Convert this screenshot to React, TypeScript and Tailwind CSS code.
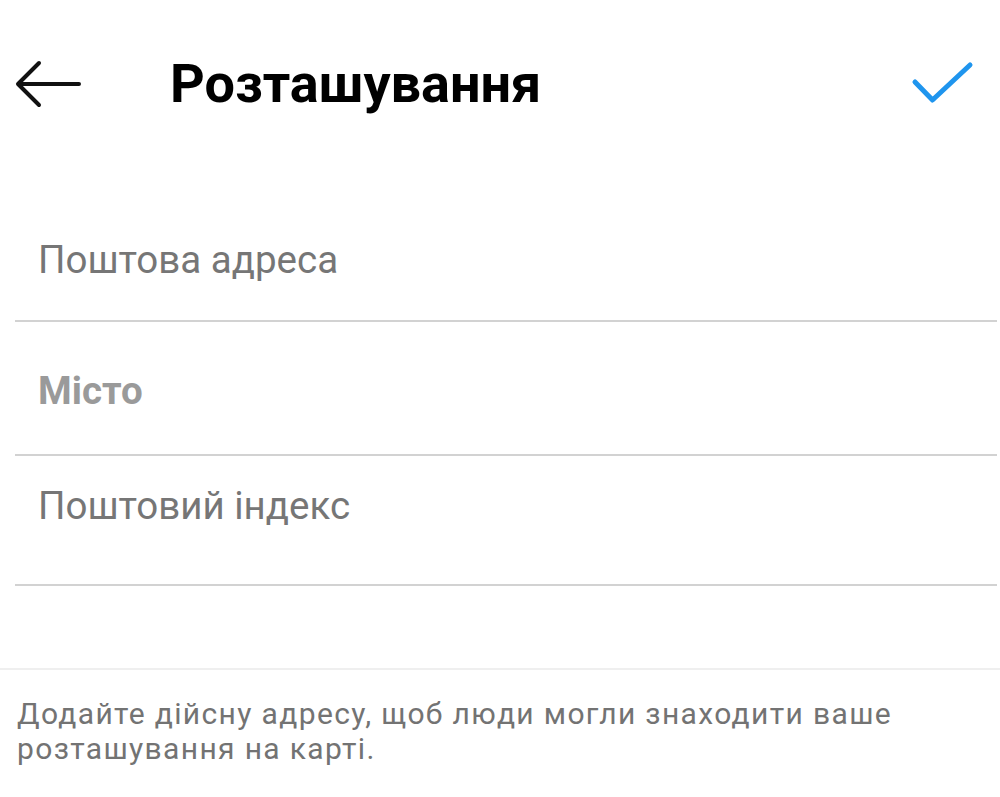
import React from "react";

const FONT = { fontFamily: "Roboto, 'Noto Sans', sans-serif" };

function BackArrow() {
  return (
    <svg width="66" height="48" viewBox="0 0 66 48" fill="none" className="shrink-0">
      <path d="M64 24H4M24 3L3 24l21 21" stroke="#111" strokeWidth="4" strokeLinecap="round" strokeLinejoin="round" />
    </svg>
  );
}

function Check() {
  return (
    <svg width="64" height="46" viewBox="0 0 64 46" fill="none" className="shrink-0">
      <path d="M5 21l17.5 18L60 4" stroke="#1f95ee" strokeWidth="5" strokeLinecap="round" strokeLinejoin="round" />
    </svg>
  );
}

export default function App() {
  return (
    <div className="w-[1000px] h-[797px] bg-white overflow-hidden text-[#111]" style={FONT}>
      {/* header */}
      <div className="h-[168px] flex items-center pl-[15px] pr-[26px]">
        <BackArrow />
        <h1 className="ml-[89px] text-[54px] font-bold leading-none text-black">Розташування</h1>
        <div className="ml-auto">
          <Check />
        </div>
      </div>

      {/* fields */}
      <div className="ml-[15px] mr-[3px]">
        <div className="h-[154px] pt-[69px] pl-[23px] border-b-2 border-[#d2d2d2]">
          <div className="text-[38.5px] leading-[45px] text-[#767676]">Поштова адреса</div>
        </div>
        <div className="h-[134px] pt-[46px] pl-[23px] border-b-2 border-[#d2d2d2]">
          <div className="text-[38.5px] leading-[45px] font-bold text-[#9a9a9a]">Місто</div>
        </div>
        <div className="h-[130px] pt-[27px] pl-[23px] border-b-2 border-[#d2d2d2]">
          <div className="text-[38.5px] leading-[45px] text-[#767676]">Поштовий індекс</div>
        </div>
      </div>

      <div className="h-[82px]" />
      <div className="h-[2px] bg-[#efefef]" />

      <p className="pt-[26px] pl-[17px] pr-[60px] text-[30px] leading-[35px] tracking-[1.35px] text-[#737373]">
        Додайте дійсну адресу, щоб люди могли знаходити ваше розташування на карті.
      </p>
    </div>
  );
}
